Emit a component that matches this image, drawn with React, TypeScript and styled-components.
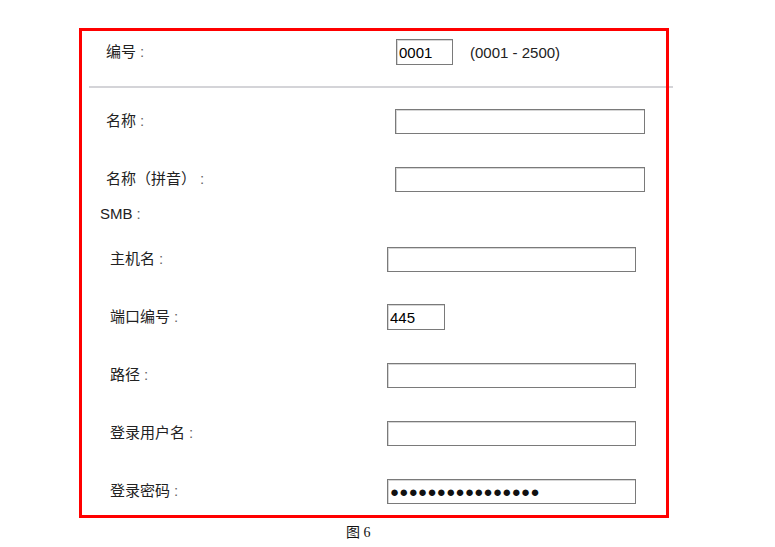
import React from 'react';
import styled, { createGlobalStyle } from 'styled-components';

const GlobalStyle = createGlobalStyle`
  html {
    background: #ffffff;
  }
  body {
    margin: 0;
    padding: 0;
    font-family: 'Liberation Sans', 'Noto Sans CJK SC', sans-serif;
    color: #222222;
  }
`;

const Page = styled.div`
  width: 775px;
  height: 547px;
  padding-top: 28px;
  box-sizing: border-box;
`;

const Frame = styled.div`
  margin-left: 79px;
  width: 590px;
  height: 490px;
  box-sizing: border-box;
  border: 3px solid #ff0000;
  display: flex;
  flex-direction: column;
`;

const HeaderRow = styled.div`
  display: flex;
  align-items: center;
  height: 26px;
  margin-top: 8px;
  margin-bottom: 21px;
  padding-left: 24px;
`;

/* the grey rule runs a little past the red frame, under it */
const Separator = styled.div`
  position: relative;
  z-index: -1;
  height: 2px;
  margin-left: 7px;
  margin-right: -7px;
  background: #d4d4d8;
`;

const Section = styled.div<{ $top: number; $indent: number }>`
  display: flex;
  flex-direction: column;
  gap: 14px;
  margin-top: ${({ $top }) => $top}px;
  padding-left: ${({ $indent }) => $indent}px;
`;

const Row = styled.div`
  display: flex;
  align-items: center;
  height: 44px;
`;

const Label = styled.div<{ $width: number }>`
  width: ${({ $width }) => $width}px;
  flex-shrink: 0;
  padding-bottom: 3px;
  font-size: 15px;
  color: #222222;
  white-space: nowrap;
`;

const Colon = styled.span`
  color: #666666;
  margin-left: 4px;
`;

const GroupTitle = styled.div`
  margin-top: 4px;
  padding-left: 18px;
  font-size: 15px;
  line-height: 18px;
  color: #222222;
`;

const Field = styled.input<{ $width: number; $tall?: boolean }>`
  width: ${({ $width }) => $width}px;
  height: ${({ $tall }) => ($tall ? 26 : 25)}px;
  box-sizing: border-box;
  margin: 0;
  padding: 0 2px;
  border: 1px solid #7a7a7a;
  box-shadow: inset 1px 1px 0 #d6d6d6;
  border-radius: 0;
  background: #ffffff;
  font-family: 'Liberation Sans', sans-serif;
  font-size: 15px;
  color: #000000;
  outline: none;
`;

const Secret = styled(Field)`
  font-size: 15px;
  color: #111111;
  letter-spacing: 0.3px;
`;

const Range = styled.span`
  margin-left: 17px;
  font-size: 15px;
  color: #222222;
`;

const Caption = styled.div`
  margin-top: 7px;
  padding-left: 346px;
  font-family: 'Liberation Serif', 'Noto Sans CJK SC', serif;
  font-size: 14px;
  line-height: 16px;
  color: #111111;
`;

const mainFields = ['名称', '名称（拼音）'];

const smbFields: { label: string; value?: string; width: number; secret?: boolean }[] = [
  { label: '主机名', width: 249 },
  { label: '端口编号', value: '445', width: 58 },
  { label: '路径', width: 249 },
  { label: '登录用户名', width: 249 },
  { label: '登录密码', value: '●'.repeat(16), width: 249, secret: true },
];

const App: React.FC = () => {
  return (
    <Page>
      <GlobalStyle />
      <Frame>
        <HeaderRow>
          <Label $width={290}>
            编号<Colon>:</Colon>
          </Label>
          <Field $width={57} $tall defaultValue="0001" />
          <Range>(0001 - 2500)</Range>
        </HeaderRow>
        <Separator />
        <Section $top={11} $indent={24}>
          {mainFields.map((label) => (
            <Row key={label}>
              <Label $width={289}>
                {label}
                <Colon>:</Colon>
              </Label>
              <Field $width={250} />
            </Row>
          ))}
        </Section>
        <GroupTitle>
          SMB<Colon>:</Colon>
        </GroupTitle>
        <Section $top={14} $indent={28}>
          {smbFields.map((f) => (
            <Row key={f.label}>
              <Label $width={277}>
                {f.label}
                <Colon>:</Colon>
              </Label>
              {f.secret ? (
                <Secret $width={f.width} readOnly defaultValue={f.value} />
              ) : (
                <Field $width={f.width} $tall={f.width < 100} defaultValue={f.value} />
              )}
            </Row>
          ))}
        </Section>
      </Frame>
      <Caption>图 6</Caption>
    </Page>
  );
};

export default App;
